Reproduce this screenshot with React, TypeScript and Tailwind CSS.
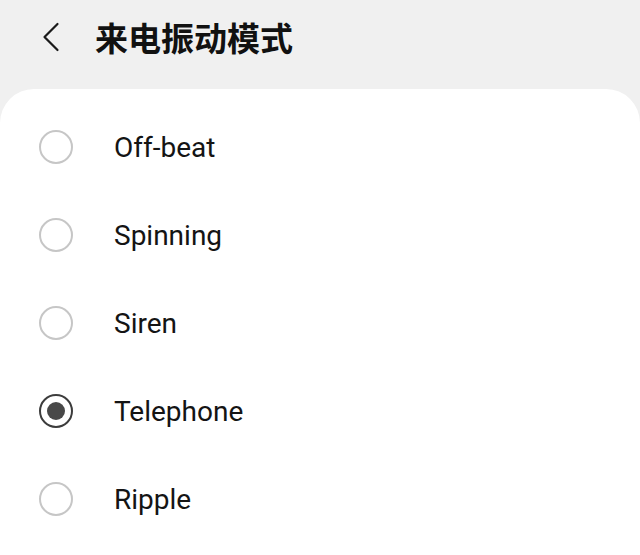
const patterns = [
  { id: "off-beat", label: "Off-beat" },
  { id: "spinning", label: "Spinning" },
  { id: "siren", label: "Siren" },
  { id: "telephone", label: "Telephone" },
  { id: "ripple", label: "Ripple" },
];

const selected = "telephone";

function Radio({ checked }: { checked: boolean }) {
  if (checked) {
    return (
      <span className="w-[34px] h-[34px] rounded-full border-2 border-[#3c3c3c] flex items-center justify-center shrink-0">
        <span className="w-[18px] h-[18px] rounded-full bg-[#484848]" />
      </span>
    );
  }
  return <span className="w-[34px] h-[34px] rounded-full border-2 border-[#c6c6c6] shrink-0" />;
}

export default function App() {
  return (
    <div className="w-[640px] h-[555px] overflow-hidden bg-[#f0f0f0] flex flex-col font-['Roboto','Noto_Sans_CJK_SC',sans-serif]">
      <header className="h-[89px] shrink-0 flex items-start pt-[16px] pl-[40px]">
        <button type="button" className="w-[22px] h-[42px] flex items-center justify-center">
          <svg width="22" height="32" viewBox="0 0 22 32" fill="none">
            <path d="M17.5 3 L4.5 16 L17.5 29" stroke="#1a1a1a" strokeWidth="2.2" strokeLinecap="round" strokeLinejoin="round" />
          </svg>
        </button>
        <h1 className="ml-[33px] text-[33px] leading-[42px] font-bold text-[#111] font-['Noto_Sans_CJK_SC',sans-serif]">
          来电振动模式
        </h1>
      </header>

      <main className="flex-1 bg-white rounded-t-[34px] pt-[14px]">
        {patterns.map(({ id, label }) => (
          <div key={id} className="h-[88px] flex items-center pl-[39px]">
            <Radio checked={id === selected} />
            <span className="ml-[41px] text-[28px] text-[#141414] translate-y-[1px]">{label}</span>
          </div>
        ))}
      </main>
    </div>
  );
}
